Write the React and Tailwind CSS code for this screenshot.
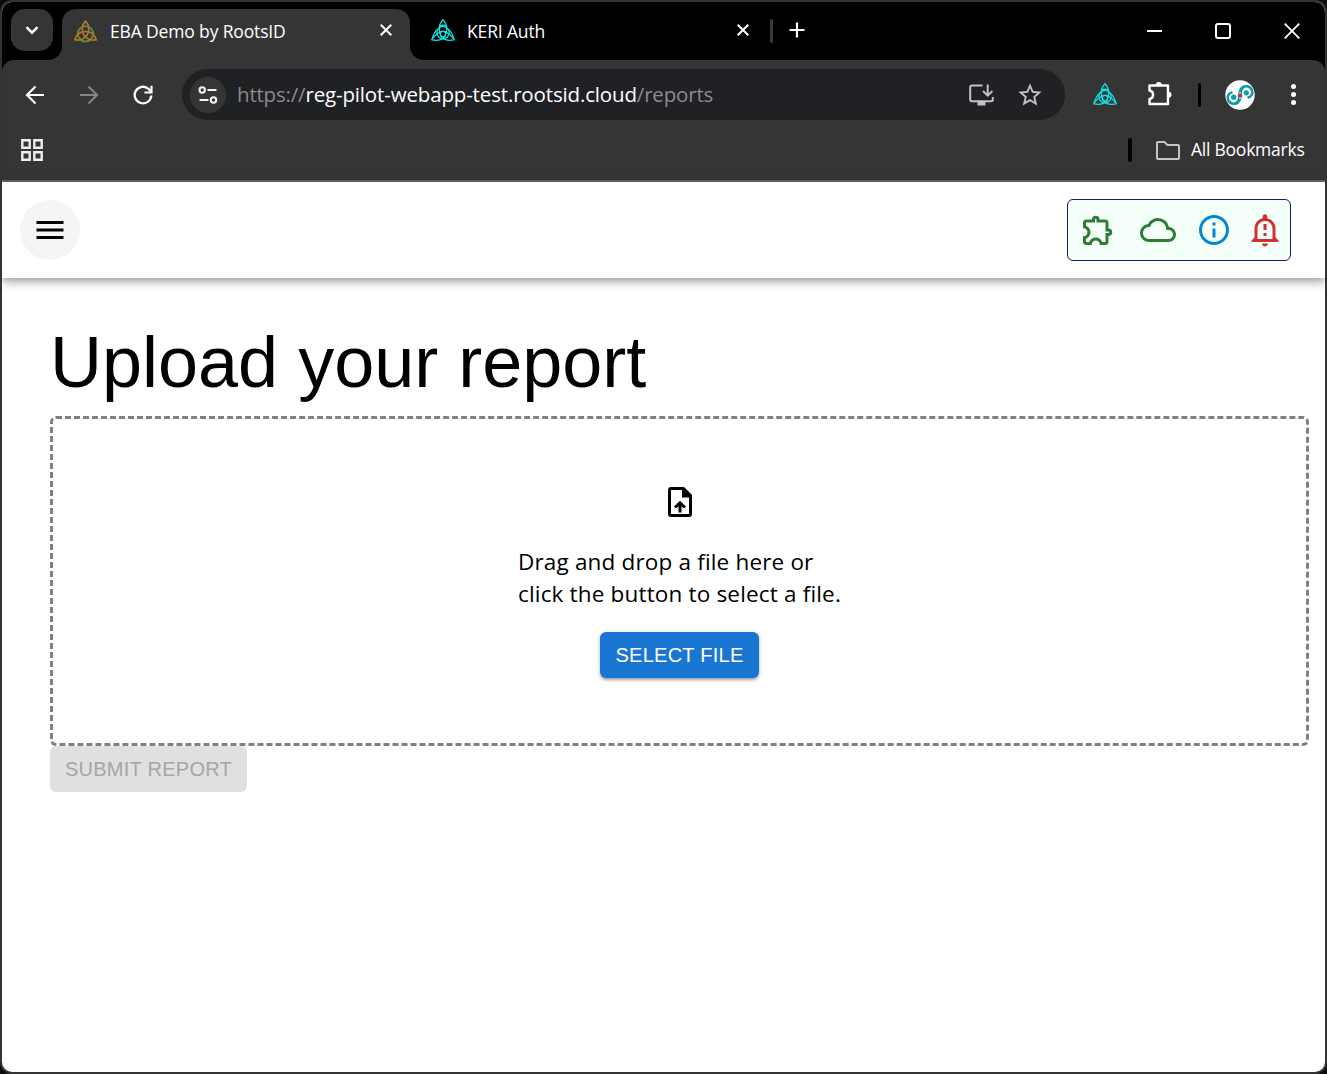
import React from "react";
import {
  MdMenu,
  MdOutlineExtension,
  MdCloudQueue,
  MdInfoOutline,
  MdOutlineNotificationImportant,
  MdStarBorder,
} from "react-icons/md";

const ARC = "M1.8 20.8A10.500 10.500 0 0 1 22.2 20.8";

function Knot({ color, ring, size }) {
  return (
    <svg width={size} height={size} viewBox="0 0 24 24" fill="none" strokeWidth="1.7" className="shrink-0">
      <circle cx="12" cy="15.2" r="7.4" stroke={ring} strokeWidth="1.900" />
      <g stroke={color} strokeLinecap="round">
        <path d={ARC} />
        <path d={ARC} transform="rotate(120 12 14.9)" />
        <path d={ARC} transform="rotate(240 12 14.9)" />
      </g>
    </svg>
  );
}

function KeriKnot() {
  return (
    <svg width="24" height="24" viewBox="0 0 24 24" fill="none" stroke="#10e6ea" strokeWidth="1.2" strokeLinejoin="round" className="shrink-0">
      <path d="M12 1.600C9.300 4.500 8.300 7.600 8.300 10C4.400 12.500 2 17 .8 21.800C5 22.600 9.500 22.300 12 20.400C14.500 22.300 19 22.600 23.200 21.800C22 17 19.600 12.500 15.700 10C15.700 7.600 14.700 4.500 12 1.600Z" />
      <path d="M8.300 10C8.300 14 9.500 18 12 20.400C14.500 18 15.700 14 15.700 10" />
      <path d="M.8 21.800C3.500 17.500 8 14 12 13.200C16 14 20.500 17.500 23.200 21.800" />
      <circle cx="12" cy="14.600" r="6.200" />
      <path d="M8.500 8.200C10.500 7 13.500 7 15.500 8.200" />
      <circle cx="12" cy="16.200" r="2.700" />
    </svg>
  );
}

function Cross({ size, w }) {
  return (
    <svg width={size} height={size} viewBox="0 0 12 12" fill="none" stroke="#fff" strokeWidth={w} className="shrink-0">
      <path d="M.7.7l10.600 10.600M11.300.7L.7 11.300" />
    </svg>
  );
}

function TabStrip() {
  return (
    <div className="flex h-[58px] bg-black pl-[9px]">
      <div className="mt-[7px] flex size-[42px] items-center justify-center rounded-[14px] bg-[#353535]">
        <svg width="14" height="9" viewBox="0 0 14 9" fill="none" stroke="#fff" strokeWidth="2.400">
          <path d="M1.500 1.200L7 6.700l5.500-5.500" />
        </svg>
      </div>
      <svg width="14" height="14" viewBox="0 0 14 14" className="-ml-[5px] mt-[44px] shrink-0">
        <path d="M0 14A14 14 0 0 0 14 0V14Z" fill="#353535" />
      </svg>
      <div className="mt-[7px] flex h-[51px] w-[348px] items-start rounded-t-[14px] bg-[#353535] pl-[11px] text-white">
        <div className="mt-[9px]"><Knot size={25} color="#b0752a" ring="#5d8a3a" /></div>
        <span className="ml-[12px] mt-[9px] w-[270px] whitespace-nowrap font-['Open_Sans','Noto_Sans',sans-serif] text-[17.500px] leading-[26px] tracking-[-0.150px]">EBA Demo by RootsID</span>
        <div className="mt-[15px]"><Cross size={12} w={2} /></div>
      </div>
      <svg width="14" height="14" viewBox="0 0 14 14" className="mt-[44px] shrink-0">
        <path d="M14 14A14 14 0 0 1 0 0V14Z" fill="#353535" />
      </svg>
      <div className="ml-[7px] mt-4"><KeriKnot /></div>
      <span className="ml-3 mt-4 w-[270px] whitespace-nowrap font-['Open_Sans','Noto_Sans',sans-serif] text-[17.500px] leading-[26px] tracking-[-0.150px] text-white">KERI Auth</span>
      <div className="mt-[22px]"><Cross size={12} w={2} /></div>
      <div className="ml-[21px] mt-[17px] h-6 w-[3px] rounded bg-[#3a3a3a]" />
      <svg width="16" height="16" viewBox="0 0 16 16" stroke="#fff" strokeWidth="2.200" className="ml-4 mt-5 shrink-0">
        <path d="M8 .5v15M.5 8h15" />
      </svg>
      <div className="ml-auto mr-[25px] mt-[21px] flex items-start">
        <div className="mt-[7px] h-[2px] w-[15px] bg-white" />
        <div className="ml-[53px] size-4 rounded-[3px] border-2 border-white" />
        <svg width="16" height="16" viewBox="0 0 16 16" stroke="#fff" strokeWidth="1.800" className="ml-[53px]">
          <path d="M.7.7l14.600 14.600M15.300.7L.7 15.300" />
        </svg>
      </div>
    </div>
  );
}

const COMMA = "M7.500 12.200C3.500 13 1.800 16.500 3 19.800C4.600 24.500 11.500 25.300 13.500 20.500C14.800 17 13.500 13 15.500 9.500C16.500 7.500 18 6.600 19.500 6.200";

function Avatar() {
  return (
    <svg width="30" height="30" viewBox="0 0 30 30" fill="none">
      <circle cx="15" cy="15" r="14.700" fill="#fff" />
      <g stroke="#0d9da8" strokeWidth="2.500">
        <path d={COMMA} />
        <path d={COMMA} transform="rotate(180 15 15)" />
      </g>
      <circle cx="8.700" cy="17.200" r="2.600" fill="#0d9da8" />
      <circle cx="21.300" cy="12.800" r="2.600" fill="#0d9da8" />
      <path d="M11.500 15.500h7M15 12v7" stroke="#f0b4b4" strokeWidth="1.500" />
      <rect x="13.500" y="14" width="3" height="3" fill="#c21d2b" />
    </svg>
  );
}

function Toolbar() {
  return (
    <div className="flex h-[69px] items-center">
      <svg width="20" height="20" viewBox="0 0 20 20" fill="none" stroke="#fff" strokeWidth="2.200" className="ml-[23px]">
        <path d="M19 10H2.500M10.500 1.500L2 10l8.500 8.500" />
      </svg>
      <svg width="20" height="20" viewBox="0 0 20 20" fill="none" stroke="#858585" strokeWidth="2" className="ml-[34px]">
        <path d="M1 10h16.500M9.500 1.500L18 10l-8.500 8.500" />
      </svg>
      <svg width="20" height="20" viewBox="0 0 20 20" fill="none" stroke="#fff" strokeWidth="2.300" className="ml-[34px]">
        <path d="M18.300 10.500A8.300 8.300 0 1 1 15.700 4L18 6.500" />
        <path d="M18.500.8V7.500H11.500" strokeWidth="2.200" />
      </svg>
      <div className="ml-[29px] flex h-[51px] w-[883px] items-center rounded-full bg-[#202124] pl-2">
        <div className="flex size-9 items-center justify-center rounded-full bg-[#353535]">
          <svg width="20" height="18" viewBox="0 0 20 18" fill="none" stroke="#f4f4f4" strokeWidth="2">
            <circle cx="4.200" cy="4" r="2.700" /><path d="M9.500 4h9" />
            <circle cx="15.500" cy="14" r="2.700" /><path d="M1.500 14h9" />
          </svg>
        </div>
        <span className="mb-[2px] ml-[11px] w-[732px] whitespace-nowrap font-['Open_Sans','Noto_Sans',sans-serif] text-[20.500px] leading-7 tracking-[-0.190px] text-[#8b8b8b]">
          https://<span className="tracking-[-0.150px] text-white">reg-pilot-webapp-test.rootsid.cloud</span>/reports
        </span>
        <svg width="25" height="22" viewBox="0 0 25 22" fill="none" stroke="#c2c2c2" strokeWidth="2" className="shrink-0">
          <path d="M13.500 1.500H3Q1.200 1.500 1.200 3.300V15.500Q1.200 17.300 3 17.300H22Q23.800 17.300 23.800 15.500V13" />
          <path d="M8.500 19.800h8" strokeWidth="3.500" />
          <path d="M18.700.5v10.500M14 7l4.700 4.700L23.400 7" />
        </svg>
        <MdStarBorder size={28} color="#c2c2c2" className="ml-[22px] shrink-0" />
      </div>
      <div className="-mt-[2px] ml-[28px]"><KeriKnot /></div>
      <svg width="26" height="26" viewBox="0 0 26 26" fill="none" stroke="#fff" strokeWidth="2.400" strokeLinejoin="round" className="-mt-[2px] ml-[30px]">
        <path d="M2.500 4.500H21V23H2.500V18C7.300 17 7.300 10.500 2.500 9.500Z" />
        <path d="M8.800 4a3 3 0 0 1 6 0ZM21.500 10.800a3 3 0 0 1 0 6Z" fill="#fff" stroke="none" />
      </svg>
      <div className="ml-[25px] h-6 w-[3px] rounded bg-black" />
      <div className="ml-[24px]"><Avatar /></div>
      <div className="ml-[36px] flex flex-col gap-[3px]">
        <i className="size-[5px] rounded-full bg-white" />
        <i className="size-[5px] rounded-full bg-white" />
        <i className="size-[5px] rounded-full bg-white" />
      </div>
    </div>
  );
}

function BookmarksBar() {
  return (
    <div className="flex h-[51px] items-start pl-[19px] pr-[20px]">
      <svg width="22" height="22" viewBox="0 0 22 22" fill="none" stroke="#eee" strokeWidth="2.400" className="mt-[10px]">
        <path d="M1.300 1.300H8.700V8.700H1.300ZM13.300 1.300H20.700V8.700H13.300ZM1.300 13.300H8.700V20.700H1.300ZM13.300 13.300H20.700V20.700H13.300Z" />
      </svg>
      <div className="ml-auto mt-[9px] h-6 w-[4px] rounded bg-black" />
      <svg width="24" height="19" viewBox="0 0 24 19" fill="none" stroke="#c4c4c4" strokeWidth="2" strokeLinejoin="round" className="ml-[24px] mt-[12px]">
        <path d="M2 1H8.500L11.500 4H22Q23 4 23 5V17Q23 18 22 18H2Q1 18 1 17V2Q1 1 2 1Z" />
      </svg>
      <span className="ml-[11px] mt-[7px] w-[114px] whitespace-nowrap font-['Open_Sans','Noto_Sans',sans-serif] text-[17.500px] leading-[26px] tracking-[-0.240px] text-white">All Bookmarks</span>
    </div>
  );
}

function UploadIcon() {
  return (
    <svg width="24" height="30" viewBox="0 0 24 30" fill="none">
      <path d="M3 1.500H15.500L22.500 8.500V27Q22.500 28.500 21 28.500H3Q1.500 28.500 1.500 27V3Q1.500 1.500 3 1.500Z" stroke="#000" strokeWidth="3" strokeLinejoin="round" />
      <path d="M14 1.500V10.500H23L15.500 1.500Z" fill="#000" />
      <path d="M12 25.500V16.500M7 20.500L12 15.800L17 20.500" stroke="#000" strokeWidth="3" />
    </svg>
  );
}

export default function App() {
  return (
    <div className="h-[1074px] w-[1327px] bg-[#0c0c0c]">
      <div className="flex h-full flex-col overflow-hidden rounded-[12px] border-2 border-[#333] bg-white">
        <TabStrip />
        <div className="bg-black">
          <div className="h-[122px] rounded-t-[12px] border-b-2 border-[#666] bg-[#353535]">
            <Toolbar />
            <BookmarksBar />
          </div>
        </div>
        <header className="flex h-24 shrink-0 items-center justify-between bg-white pl-[18px] pr-[34px] shadow-[0_3px_6px_-1px_rgba(0,0,0,0.2),0_6px_8px_0_rgba(0,0,0,0.14),0_1px_15px_0_rgba(0,0,0,0.12)]">
          <button className="flex size-[60px] items-center justify-center rounded-full bg-[#f5f5f5]">
            <MdMenu size={36} color="#000" />
          </button>
          <div className="flex h-[62px] w-[224px] items-center rounded-[6px] border border-[#191970] bg-[#f5fffa] pl-[12px]">
            <MdOutlineExtension size={36} color="#2e7d32" />
            <MdCloudQueue size={36} color="#2e7d32" className="ml-[24px]" />
            <MdInfoOutline size={36} color="#0288d1" className="ml-5" />
            <MdOutlineNotificationImportant size={36} color="#d32f2f" className="ml-[15px]" />
          </div>
        </header>
        <main className="flex flex-col items-start pl-12 pr-4 pt-[42px]">
          <h1 className="h-[96px] font-['Liberation_Sans',Arial,sans-serif] text-[72px] leading-[84px] text-black">Upload your report</h1>
          <section className="flex h-[330px] w-full flex-col items-center rounded-[6px] border-[3px] border-dashed border-[#808080] pt-[68px]">
            <UploadIcon />
            <p className="mt-[29px] w-[323px] whitespace-nowrap font-['Open_Sans','Noto_Sans',sans-serif] text-[22.500px] leading-8 tracking-[0.170px] text-black">
              Drag and drop a file here or<br />click the button to select a file.
            </p>
            <button className="mt-[22px] h-[46px] w-[159px] rounded-[6px] bg-[#1976d2] pb-px font-['Liberation_Sans',Arial,sans-serif] text-[20px] tracking-[0.250px] text-white shadow-[0_3px_3px_-2px_rgba(0,0,0,0.2),0_2px_3px_0_rgba(0,0,0,0.2),0_1px_6px_0_rgba(0,0,0,0.12)]">SELECT FILE</button>
          </section>
          <button className="h-[46px] w-[197px] rounded-[6px] bg-[#e0e0e0] pb-px font-['Liberation_Sans',Arial,sans-serif] text-[20px] tracking-[0.250px] text-[#a6a6a6]">SUBMIT REPORT</button>
        </main>
      </div>
    </div>
  );
}
